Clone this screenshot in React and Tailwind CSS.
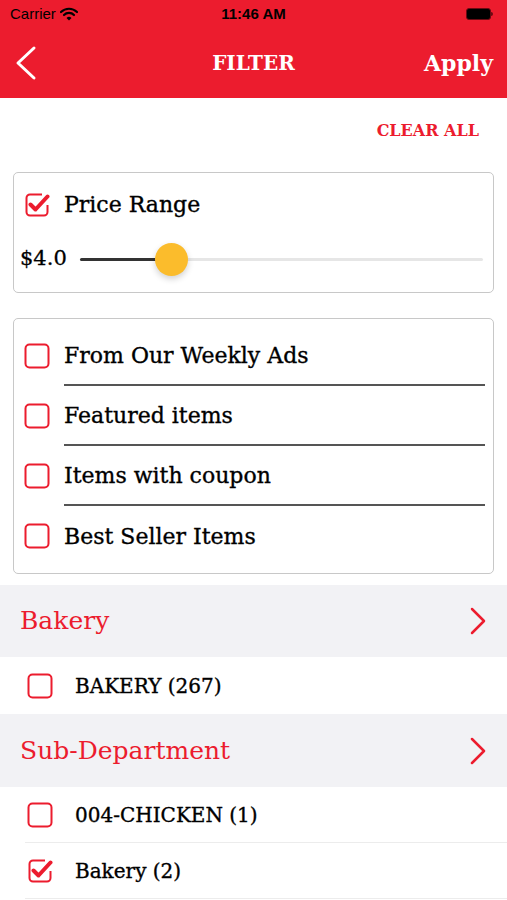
import { useState } from 'react';

const RED = '#ec1c2e';

const Box = ({ checked }) => (
  <svg width="26" height="26" viewBox="0 0 26 26" className="shrink-0">
    {checked ? (
      <>
        <path d="M18 2.5H6A3.5 3.5 0 0 0 2.5 6v14A3.5 3.5 0 0 0 6 23.5h14a3.5 3.5 0 0 0 3.5-3.5v-7" fill="none" stroke={RED} strokeWidth="2" />
        <path d="M6.5 12.5l5 5L23.5 4.5" fill="none" stroke={RED} strokeWidth="4" strokeLinecap="round" strokeLinejoin="round" />
      </>
    ) : (
      <rect x="1.5" y="1.5" width="23" height="23" rx="4" fill="none" stroke={RED} strokeWidth="2" />
    )}
  </svg>
);

const Chevron = () => (
  <svg width="18" height="30" viewBox="0 0 18 30">
    <path d="M3 3l12 12L3 27" fill="none" stroke={RED} strokeWidth="2.5" strokeLinecap="round" strokeLinejoin="round" />
  </svg>
);

const App = () => {
  const [options] = useState([
    'From Our Weekly Ads',
    'Featured items',
    'Items with coupon',
    'Best Seller Items',
  ]);

  return (
    <div className="w-[507px] h-[900px] overflow-hidden bg-white" style={{ fontFamily: '"DejaVu Serif", serif' }}>
      {/* status + nav */}
      <div className="bg-[#ec1c2e] h-[98px] flex flex-col">
        <div className="h-[28px] flex items-center justify-between px-[10px] text-[15px] text-black" style={{ fontFamily: '"Liberation Sans", sans-serif' }}>
          <div className="flex items-center gap-[4px] w-[100px]">
            <span>Carrier</span>
            <svg width="18" height="14" viewBox="0 0 18 14">
              <path d="M1 5a11.5 11.5 0 0 1 16 0" fill="none" stroke="black" strokeWidth="2.2" strokeLinecap="round" />
              <path d="M4 8a7 7 0 0 1 10 0" fill="none" stroke="black" strokeWidth="2.2" strokeLinecap="round" />
              <path d="M6.5 11l2.5 2.5 2.5-2.5a3.6 3.6 0 0 0-5 0z" fill="black" />
            </svg>
          </div>
          <span className="font-bold">11:46 AM</span>
          <div className="w-[100px] flex justify-end pr-[4px]">
            <div className="flex items-center">
              <div className="w-[25px] h-[12px] rounded-[3px] border border-[#6b0a12] bg-black" />
              <div className="w-[2px] h-[4px] bg-[#6b0a12] rounded-r" />
            </div>
          </div>
        </div>
        <div className="flex-1 flex items-center justify-between pl-[14px] pr-[14px] text-white">
          <div className="w-[80px] flex items-center">
            <svg width="24" height="36" viewBox="0 0 24 36">
              <path d="M20 3L4 18l16 15" fill="none" stroke="white" strokeWidth="3" strokeLinecap="round" strokeLinejoin="round" />
            </svg>
          </div>
          <span className="text-[20px] font-bold">FILTER</span>
          <span className="w-[80px] text-right text-[22px] font-bold">Apply</span>
        </div>
      </div>

      <div className="flex justify-end pr-[28px] pt-[21px] pb-[29px]">
        <span className="text-[#ec1c2e] text-[16px] font-bold">CLEAR ALL</span>
      </div>

      {/* price range */}
      <div className="mx-[13px] border border-[#c8c8c8] rounded-[5px] px-[10px] pt-[15px] pb-[16px]">
        <div className="flex items-center gap-[14px]">
          <Box checked />
          <span className="text-[22px] text-black [-webkit-text-stroke:0.35px]">Price Range</span>
        </div>
        <div className="flex items-center gap-[13px] mt-[21px] -ml-[4px]">
          <span className="text-[21px] text-black [-webkit-text-stroke:0.3px]">$4.0</span>
          <div className="relative flex-1 h-[34px] flex items-center">
            <div className="w-full h-[3px] bg-[#e6e6e6] rounded-full" />
            <div className="absolute left-0 w-[82px] h-[3px] bg-[#333] rounded-full" />
            <div className="absolute left-[75px] w-[33px] h-[33px] rounded-full bg-[#fbbc2c] shadow-[0_3px_6px_rgba(0,0,0,0.18)]" />
          </div>
        </div>
      </div>

      {/* options */}
      <div className="mx-[13px] mt-[25px] border border-[#c8c8c8] rounded-[5px] pl-[10px] pr-[8px] py-[7px]">
        {options.map((opt, i) => (
          <div key={opt} className="flex items-center gap-[14px] h-[60px]">
            <Box checked={false} />
            <div className={`flex-1 h-full flex items-center ${i < options.length - 1 ? 'border-b-2 border-[#555]' : ''}`}>
              <span className="text-[22px] text-black [-webkit-text-stroke:0.35px]">{opt}</span>
            </div>
          </div>
        ))}
      </div>

      {/* bakery */}
      <div className="mt-[11px] bg-[#f2f2f5] h-[72px] flex items-center justify-between pl-[20px] pr-[20px]">
        <span className="text-[25px] text-[#ec1c2e]">Bakery</span>
        <Chevron />
      </div>
      <div className="h-[57px] flex items-center gap-[22px] pl-[27px]">
        <Box checked={false} />
        <span className="text-[20px] text-black [-webkit-text-stroke:0.35px]">BAKERY (267)</span>
      </div>

      <div className="bg-[#f2f2f5] h-[73px] flex items-center justify-between pl-[20px] pr-[20px]">
        <span className="text-[25px] text-[#ec1c2e]">Sub-Department</span>
        <Chevron />
      </div>
      <div className="pl-[25px]">
        <div className="h-[56px] flex items-center gap-[22px] pl-[2px] border-b border-[#ececec]">
          <Box checked={false} />
          <span className="text-[20px] text-black [-webkit-text-stroke:0.35px]">004-CHICKEN (1)</span>
        </div>
        <div className="h-[56px] flex items-center gap-[22px] pl-[2px] border-b border-[#ececec]">
          <Box checked />
          <span className="text-[20px] text-black [-webkit-text-stroke:0.35px]">Bakery (2)</span>
        </div>
      </div>
    </div>
  );
};

export default App;
